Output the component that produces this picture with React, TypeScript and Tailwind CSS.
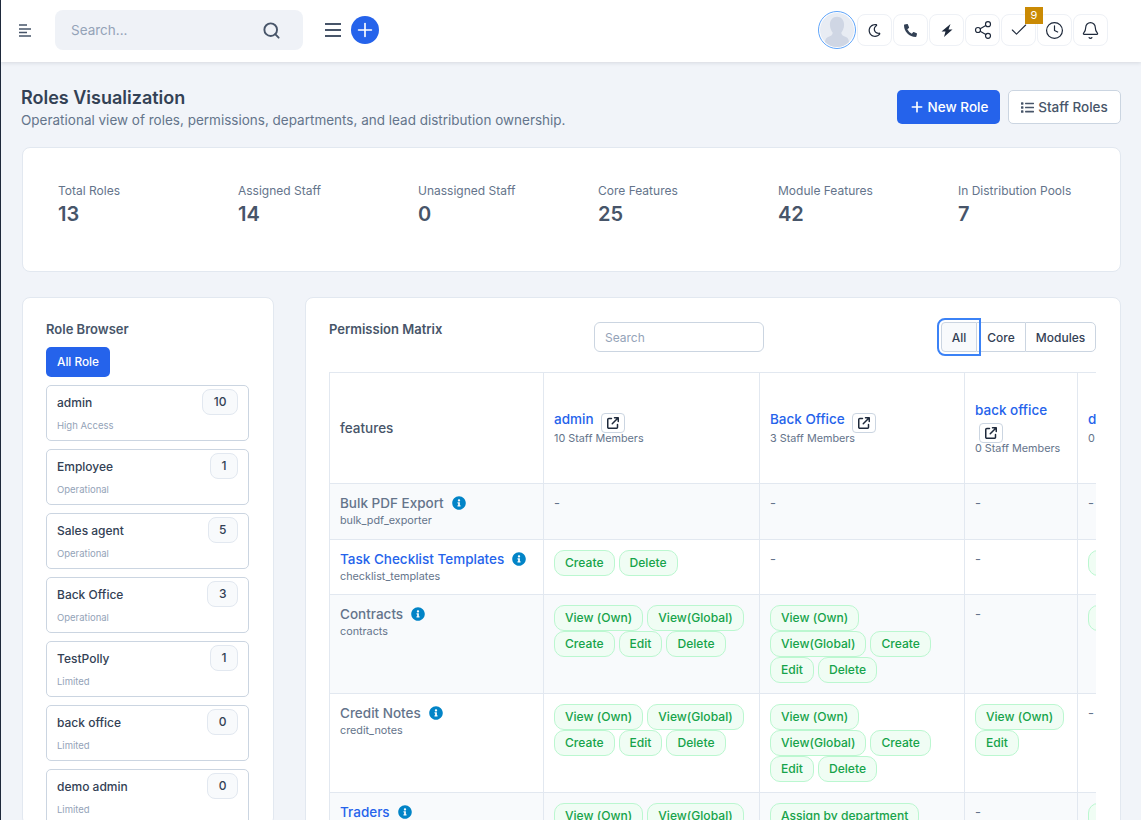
import React from 'react';
import { Search, Plus, Share2, Check, Clock, Bell } from 'lucide-react';
import { FaPhoneAlt, FaList, FaInfoCircle, FaRegMoon } from 'react-icons/fa';
import { FaArrowUpRightFromSquare } from 'react-icons/fa6';

const stats = [
  { label: 'Total Roles', value: '13' },
  { label: 'Assigned Staff', value: '14' },
  { label: 'Unassigned Staff', value: '0' },
  { label: 'Core Features', value: '25' },
  { label: 'Module Features', value: '42' },
  { label: 'In Distribution Pools', value: '7' },
];

const roles = [
  { name: 'admin', access: 'High Access', count: 10 },
  { name: 'Employee', access: 'Operational', count: 1 },
  { name: 'Sales agent', access: 'Operational', count: 5 },
  { name: 'Back Office', access: 'Operational', count: 3 },
  { name: 'TestPolly', access: 'Limited', count: 1 },
  { name: 'back office', access: 'Limited', count: 0 },
  { name: 'demo admin', access: 'Limited', count: 0 },
];

const full = ['View (Own)', 'View(Global)', 'Create', 'Edit', 'Delete'];

const rows = [
  { title: 'Bulk PDF Export', key: 'bulk_pdf_exporter', link: false, h: 'h-[56px]', cells: [[], [], [], []] },
  { title: 'Task Checklist Templates', key: 'checklist_templates', link: true, h: 'h-[55px]', cells: [['Create', 'Delete'], [], [], ['Create']] },
  { title: 'Contracts', key: 'contracts', link: false, h: 'h-[99px]', cells: [full, full, [], ['View']] },
  { title: 'Credit Notes', key: 'credit_notes', link: false, h: 'h-[99px]', cells: [full, full, ['View (Own)', 'Edit'], []] },
  { title: 'Traders', key: 'traders', link: true, h: 'h-[99px]', cells: [['View (Own)', 'View(Global)'], ['Assign by department'], [], ['View']] },
];

const columns = [
  { name: 'admin', staff: '10 Staff Members' },
  { name: 'Back Office', staff: '3 Staff Members' },
  { name: 'back office', staff: '0 Staff Members' },
  { name: 'demo', staff: '0 Staff Members' },
];

function TopIcon({ children }: { children: React.ReactNode }) {
  return (
    <button className="flex h-8 w-[35px] items-center justify-center rounded-lg border border-[#eef1f6] bg-white text-[#1e293b]">
      {children}
    </button>
  );
}

function Pill({ label }: { label: string }) {
  return (
    <span className="inline-block h-[26px] rounded-[10px] border border-[#bbf7d0] bg-[#f0fdf4] px-[10px] text-[12.100px] font-medium leading-[24px] whitespace-nowrap text-[#16a34a]">
      {label}
    </span>
  );
}

function Header() {
  return (
    <header className="relative z-10 flex h-[62px] items-center bg-white pr-[33px] pb-[2px] pl-[18px] shadow-[0_1px_4px_rgba(15,23,42,0.12)]">
      <svg width="13" height="13" viewBox="0 0 13 13" className="text-[#475569]">
        <path d="M0 1h8M0 5h12M0 8.500h8M0 12h12" stroke="currentColor" strokeWidth="1.300" />
      </svg>
      <div className="ml-[23px] flex h-10 w-[248px] items-center justify-between rounded-lg bg-[#eff2f7] pr-[22px] pl-4">
        <span className="text-[13.500px] text-[#94a3b8]">Search...</span>
        <Search size={19} strokeWidth={2.4} className="text-[#475569]" />
      </div>
      <svg width="16" height="14" viewBox="0 0 16 14" className="ml-[22px] text-[#475569]">
        <path d="M0 1h16M0 7h16M0 13h16" stroke="currentColor" strokeWidth="2" />
      </svg>
      <span className="ml-[10px] flex h-7 w-7 items-center justify-center rounded-full bg-[#2563eb] text-white">
        <Plus size={22} strokeWidth={1.8} />
      </span>
      <div className="ml-auto flex items-center gap-px">
        <div className="flex h-[38px] w-[38px] items-center justify-center rounded-full border border-[#60a5fa] bg-white p-px">
          <svg viewBox="0 0 36 36" className="h-full w-full rounded-full bg-[#e8ecf3]">
            <path d="M18 4c4.500 0 7.500 3.500 7.500 8.500 0 3.500-1.500 6.500-3 8.500.3 2.500 2 3.500 5 4.500 2.500 1 3.500 3.500 3.500 10.500H5c0-7 1-9.500 3.500-10.500 3-1 4.700-2 5-4.500-1.500-2-3-5-3-8.500C10.500 7.500 13.500 4 18 4z" fill="#cfd6e4" />
          </svg>
        </div>
        <TopIcon><FaRegMoon size={13} /></TopIcon>
        <TopIcon><FaPhoneAlt size={13} className="text-[#334155]" /></TopIcon>
        <TopIcon>
          <svg width="12" height="13" viewBox="0 0 12 13" fill="currentColor">
            <path d="M9.500 0 .5 7.500h4L3 13l8.500-7.500h-4z" />
          </svg>
        </TopIcon>
        <TopIcon><Share2 size={20} strokeWidth={1.4} /></TopIcon>
        <div className="relative">
          <TopIcon><Check size={20} strokeWidth={1.3} /></TopIcon>
          <span className="absolute top-[-7px] right-[-7px] flex h-[17px] w-[18px] items-center justify-center bg-[#ca8a04] text-[11px] text-white">9</span>
        </div>
        <TopIcon><Clock size={19} strokeWidth={1.5} /></TopIcon>
        <TopIcon><Bell size={19} strokeWidth={1.5} /></TopIcon>
      </div>
    </header>
  );
}

function RoleBrowser() {
  return (
    <aside className="w-[252px] shrink-0 rounded-lg border border-[#e2e8f0] bg-white pt-[23px] pr-6 pl-[23px]">
      <h2 className="text-[13px] leading-[16px] font-semibold text-[#475569]">Role Browser</h2>
      <button className="mt-[10px] h-[30px] w-16 rounded-[5px] bg-[#2563eb] pt-px text-[11.800px] font-medium text-white">All Role</button>
      <ul className="mt-2 flex flex-col gap-2">
        {roles.map((r) => (
          <li key={r.name} className="flex h-14 justify-between rounded-[5px] border border-[#cbd5e1] px-[10px] pt-[3px]">
            <div className="pt-[5px]">
              <p className="text-[12px] leading-[18px] font-medium text-[#334155]">{r.name}</p>
              <p className="mt-[8px] text-[9.500px] leading-[12px] text-[#94a3b8]">{r.access}</p>
            </div>
            <span className="flex h-[26px] min-w-7 items-center justify-center rounded-lg border border-[#e2e8f0] bg-[#f8fafc] px-[10.500px] text-[12px] font-medium text-[#334155]">
              {r.count}
            </span>
          </li>
        ))}
      </ul>
    </aside>
  );
}

function RoleHead({ name, staff }: { name: string; staff: string }) {
  return (
    <th className="border border-[#e2e8f0] px-[10px] text-left font-normal">
      <div className="text-[13.500px] leading-[19px] font-medium text-[#2563eb]">
        {name}{' '}
        <span className="ml-[4px] inline-flex h-5 w-6 items-center justify-center rounded-[4px] border border-[#cbd5e1] align-[-5px] text-[#1e293b]">
          <FaArrowUpRightFromSquare size={12} />
        </span>
      </div>
      <div className="-mt-px text-[10.800px] leading-[14px] text-[#64748b]">{staff}</div>
    </th>
  );
}

function PermissionMatrix() {
  return (
    <section className="ml-[31px] min-w-0 flex-1 rounded-lg border border-[#e2e8f0] bg-white pt-[23px] pr-6 pl-[23px]">
      <div className="flex items-start justify-between">
        <h2 className="w-[265px] text-[13px] leading-[16px] font-semibold text-[#475569]">Permission Matrix</h2>
        <div className="mt-px flex h-[30px] w-[170px] items-center rounded-md border border-[#cbd5e1] px-[10px] pt-px text-[12px] text-[#94a3b8]">Search</div>
        <div className="mt-px ml-auto flex h-[30px] overflow-visible text-[12px] font-medium text-[#334155]">
          <button className="relative z-10 h-[30px] w-[36px] rounded-l-[4px] border border-[#cbd5e1] bg-[#f8fafc] pt-px outline-2 outline-offset-2 outline-[#3b82f6]">All</button>
          <button className="h-[30px] w-[48px] border-y border-[#cbd5e1] pt-px">Core</button>
          <button className="h-[30px] w-[71px] rounded-r-[5px] border border-[#cbd5e1] pt-px">Modules</button>
        </div>
      </div>
      <div className="mt-5 overflow-hidden">
        <table className="w-[860px] table-fixed border-collapse font-normal">
          <colgroup>
            <col className="w-[214px]" />
            <col className="w-[216px]" />
            <col className="w-[205px]" />
            <col className="w-[113px]" />
            <col className="w-[112px]" />
          </colgroup>
          <thead>
            <tr className="h-[111px]">
              <th className="border border-[#e2e8f0] px-[10px] text-left text-[13.500px] font-medium text-[#475569]">features</th>
              {columns.map((c) => (
                <RoleHead key={c.name} name={c.name} staff={c.staff} />
              ))}
            </tr>
          </thead>
          <tbody>
            {rows.map((row, i) => (
              <tr key={row.key} className={`${row.h} ${i % 2 === 0 ? 'bg-[#f8fafc]' : 'bg-white'}`}>
                <td className="border border-[#e2e8f0] px-[10px] pt-[9px] align-top">
                  <div className={`flex items-center text-[13.500px] leading-[20px] font-medium ${row.link ? 'text-[#2563eb]' : 'text-[#64748b]'}`}>
                    {row.title}
                    <FaInfoCircle size={14} className="ml-2 text-[#0284c7]" />
                  </div>
                  <div className="text-[10.800px] leading-[15px] text-[#64748b]">{row.key}</div>
                </td>
                {row.cells.map((cell, j) => (
                  <td key={j} className="border border-[#e2e8f0] px-[10px] pt-[10px] align-top">
                    {cell.length === 0 ? (
                      <div className="text-[13px] leading-[18px] text-[#64748b]">-</div>
                    ) : (
                      <div className="flex flex-wrap gap-x-1 gap-y-0">
                        {cell.map((p) => (
                          <Pill key={p} label={p} />
                        ))}
                      </div>
                    )}
                  </td>
                ))}
              </tr>
            ))}
          </tbody>
        </table>
      </div>
    </section>
  );
}

export default function App() {
  return (
    <div className="h-[820px] overflow-hidden border-l border-[#1e293b] bg-[#f1f4f9] font-['Inter',sans-serif]">
      <Header />
      <main className="pt-[24px] pr-[20px] pl-[21px]">
        <div className="flex items-start justify-between">
          <div className="-ml-px">
            <h1 className="text-[18px] leading-[24px] font-semibold text-[#334155]">Roles Visualization</h1>
            <p className="text-[13.500px] leading-[20px] text-[#64748b]">Operational view of roles, permissions, departments, and lead distribution ownership.</p>
          </div>
          <div className="mt-[4px] flex gap-2">
            <button className="flex h-[34px] w-[103px] items-center justify-center gap-[3px] rounded-[5px] bg-[#2563eb] text-[13.500px] font-medium text-white">
              <Plus size={16} strokeWidth={2.5} />New Role
            </button>
            <button className="flex h-[34px] w-[113px] items-center justify-center gap-1 rounded-[5px] border border-[#cbd5e1] bg-white text-[13.500px] font-medium text-[#475569]">
              <FaList size={13} />Staff Roles
            </button>
          </div>
        </div>
        <div className="mt-[17px] grid h-[125px] grid-cols-[repeat(6,180px)] rounded-lg border border-[#e2e8f0] bg-white pt-[35px] pl-[35px]">
          {stats.map((s) => (
            <div key={s.label}>
              <p className="text-[12px] leading-[16px] text-[#64748b]">{s.label}</p>
              <p className="text-[20px] leading-[30px] font-semibold text-[#475569]">{s.value}</p>
            </div>
          ))}
        </div>
        <div className="mt-[25px] flex items-start">
          <RoleBrowser />
          <PermissionMatrix />
        </div>
      </main>
    </div>
  );
}
